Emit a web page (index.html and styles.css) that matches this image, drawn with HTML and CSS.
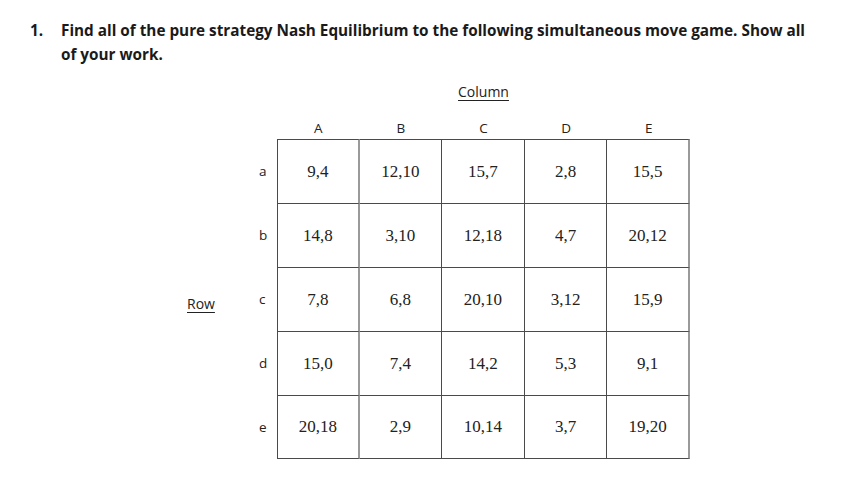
FILE: index.html
```html
<!DOCTYPE html>
<html>
<head>
<meta charset="utf-8">
<link rel="stylesheet" href="styles.css">
</head>
<body>
<div class="page">
  <div class="question">
    <span class="num">1.</span>
    <p class="qtext">Find all of the pure strategy Nash Equilibrium to the following simultaneous move game. Show all of your work.</p>
  </div>
  <div class="game">
    <div class="col-title"><span class="ul">Column</span></div>
    <div class="matrix">
      <div class="side"><span class="ul row-title">Row</span></div>
      <div class="grid">
        <div class="corner"></div>
        <div class="hd">A</div><div class="hd">B</div><div class="hd">C</div><div class="hd">D</div><div class="hd">E</div>

        <div class="rl">a</div>
        <div class="c first">9,4</div><div class="c gl">12,10</div><div class="c">15,7</div><div class="c">2,8</div><div class="c gr">15,5</div>

        <div class="rl">b</div>
        <div class="c first">14,8</div><div class="c gl">3,10</div><div class="c">12,18</div><div class="c">4,7</div><div class="c gr">20,12</div>

        <div class="rl">c</div>
        <div class="c first">7,8</div><div class="c gl">6,8</div><div class="c">20,10</div><div class="c">3,12</div><div class="c gr">15,9</div>

        <div class="rl">d</div>
        <div class="c first">15,0</div><div class="c gl">7,4</div><div class="c">14,2</div><div class="c">5,3</div><div class="c gr">9,1</div>

        <div class="rl">e</div>
        <div class="c first">20,18</div><div class="c gl">2,9</div><div class="c">10,14</div><div class="c">3,7</div><div class="c gr">19,20</div>
      </div>
    </div>
  </div>
</div>
</body>
</html>
```

FILE: styles.css
```css
html, body {
  margin: 0;
  padding: 0;
  background: #ffffff;
}

.page {
  width: 853px;
  height: 490px;
  overflow: hidden;
}

.question {
  display: flex;
  padding: 18px 0 0 30px;
  font-family: "Open Sans", "Liberation Sans", sans-serif;
  font-weight: bold;
  font-size: 15.3px;
  line-height: 24px;
  color: #1a1a1a;
}

.num {
  width: 31px;
  flex: none;
}

.qtext {
  margin: 0;
  width: 748px;
}

.game {
  margin-left: 187px;
}

.col-title {
  margin: 16px 0 0 90px;
  width: 413px;
  text-align: center;
  font-family: "Open Sans", "Liberation Sans", sans-serif;
  font-size: 14px;
  line-height: 20px;
  color: #222;
}

.ul {
  text-decoration: underline;
  text-underline-offset: 3px;
}

.matrix {
  display: flex;
}

.side {
  width: 60px;
  display: flex;
  align-items: flex-end;
  padding-bottom: 146px;
  box-sizing: border-box;
  font-family: "Open Sans", "Liberation Sans", sans-serif;
  font-size: 14px;
  color: #222;
}

.grid {
  display: grid;
  grid-template-columns: 30px repeat(5, 82.6px);
  grid-template-rows: 24px repeat(5, 64px);
  margin-top: 13px;
}

.hd, .rl {
  font-family: "Open Sans", "Liberation Sans", sans-serif;
  font-size: 13.5px;
  color: #222;
  display: flex;
  align-items: center;
  justify-content: center;
}

.hd {
  align-items: flex-end;
  padding-bottom: 2px;
}

.rl {
  justify-content: flex-start;
  padding-left: 12px;
}

.c {
  display: flex;
  align-items: center;
  justify-content: center;
  font-family: "Liberation Serif", "Times New Roman", serif;
  font-size: 17px;
  color: #222;
  border-right: 1px solid #4a4a4a;
  border-top: 1px solid #4a4a4a;
}

.grid > .c:nth-last-child(-n+5) {
  border-bottom: 1px solid #4a4a4a;
}

.c.first {
  border-left: 1px solid #4a4a4a;
  border-right: 2px solid #9a9a9a;
}

.c.gr {
  border-right: 2px solid #9a9a9a;
}
```
